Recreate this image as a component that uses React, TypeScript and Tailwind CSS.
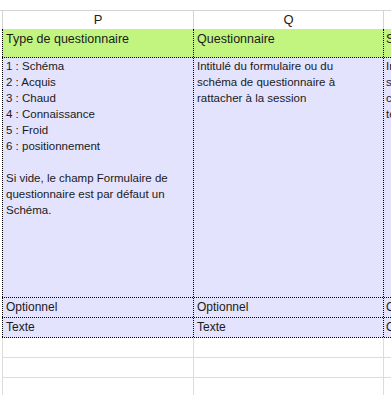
import React from "react";

const font = { fontFamily: '"Liberation Sans", Arial, sans-serif' };

export default function App() {
  const dot = "border-dotted border-black";
  return (
    <div className="w-[391px] h-[395px] bg-white overflow-hidden text-[#1a1a1a]" style={font}>
      <div className="h-[10px]" />
      {/* column header */}
      <div className="flex h-[19px] border-t border-[#d4d4d4] pl-[2px]">
        <div className="w-[191px] border-l border-[#d4d4d4] flex items-center justify-center text-[13px] text-[#222]">P</div>
        <div className="w-[190px] border-l border-[#d4d4d4] flex items-center justify-center text-[13px] text-[#222]">Q</div>
        <div className="flex-1 border-l border-[#d4d4d4]" />
      </div>
      {/* green header row */}
      <div className="pl-[2px]">
        <div className={`flex h-[29px] bg-[#c2f57f] border-b ${dot} text-[12.5px] leading-[16px] whitespace-nowrap`}>
          <div className={`w-[191px] border-l ${dot} pl-[3px] pt-[2px] overflow-hidden`}>Type de questionnaire</div>
          <div className={`w-[190px] border-l ${dot} pl-[3px] pt-[2px] overflow-hidden`}>Questionnaire</div>
          <div className={`flex-1 border-l ${dot} pl-[2px] pt-[2px] overflow-hidden`}>Session</div>
        </div>
        {/* blue description row */}
        <div className={`flex h-[240px] bg-[#e3e3fe] border-b ${dot} text-[11.5px] leading-[16px] whitespace-nowrap`}>
          <div className={`w-[191px] border-l ${dot} pl-[3px] overflow-hidden`}>
            <div>1 : Schéma</div>
            <div>2 : Acquis</div>
            <div>3 : Chaud</div>
            <div>4 : Connaissance</div>
            <div>5 : Froid</div>
            <div>6 : positionnement</div>
            <div className="h-[16px]" />
            <div>Si vide, le champ Formulaire de</div>
            <div>questionnaire est par défaut un</div>
            <div>Schéma.</div>
          </div>
          <div className={`w-[190px] border-l ${dot} pl-[3px] overflow-hidden`}>
            <div>Intitulé du formulaire ou du</div>
            <div>schéma de questionnaire à</div>
            <div>rattacher à la session</div>
          </div>
          <div className={`flex-1 border-l ${dot} pl-[2px] overflow-hidden`}>
            <div>Intitulé</div>
            <div>session</div>
            <div>champ</div>
            <div>texte</div>
          </div>
        </div>
        {/* Optionnel row */}
        <div className={`flex h-[20px] bg-[#e3e3fe] border-b ${dot} text-[12px] leading-[19px] whitespace-nowrap`}>
          <div className={`w-[191px] border-l ${dot} pl-[3px] overflow-hidden`}>Optionnel</div>
          <div className={`w-[190px] border-l ${dot} pl-[3px] overflow-hidden`}>Optionnel</div>
          <div className={`flex-1 border-l ${dot} pl-[2px] overflow-hidden`}>Optionnel</div>
        </div>
        {/* Texte row */}
        <div className={`flex h-[20px] bg-[#e3e3fe] border-b ${dot} text-[12px] leading-[19px] whitespace-nowrap`}>
          <div className={`w-[191px] border-l ${dot} pl-[3px] overflow-hidden`}>Texte</div>
          <div className={`w-[190px] border-l ${dot} pl-[3px] overflow-hidden`}>Texte</div>
          <div className={`flex-1 border-l ${dot} pl-[2px] overflow-hidden`}>Oui</div>
        </div>
        {/* empty rows */}
        {[0, 1, 2].map((i) => (
          <div key={i} className="flex h-[20px] border-b border-[#dcdcdc]">
            <div className="w-[191px] border-l border-[#dcdcdc]" />
            <div className="w-[190px] border-l border-[#dcdcdc]" />
            <div className="flex-1 border-l border-[#dcdcdc]" />
          </div>
        ))}
      </div>
    </div>
  );
}
